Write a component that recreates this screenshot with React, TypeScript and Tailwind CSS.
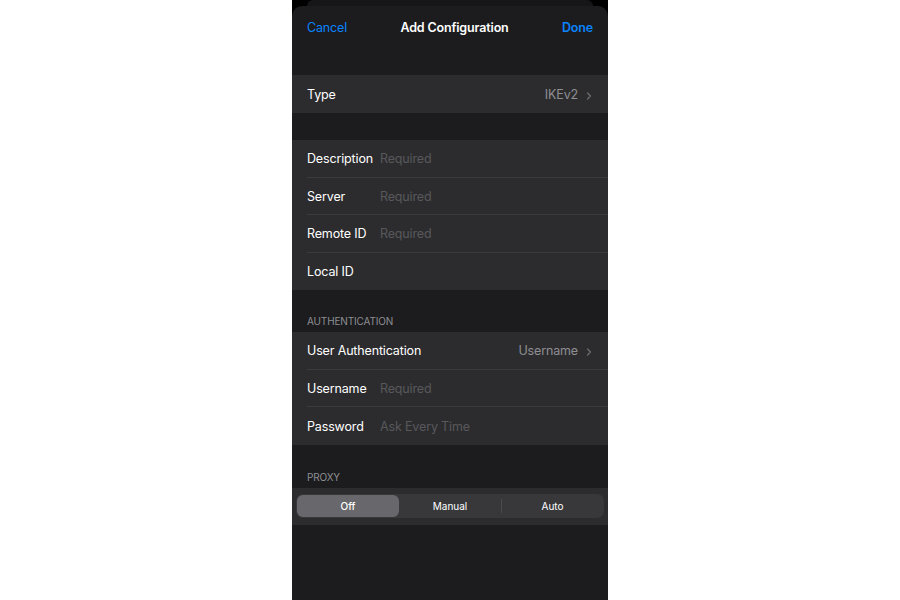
import { ChevronRight } from "lucide-react";

type Field = { label: string; placeholder?: string; value?: string; chevron?: boolean };

const generalFields: Field[] = [
  { label: "Description", placeholder: "Required" },
  { label: "Server", placeholder: "Required" },
  { label: "Remote ID", placeholder: "Required" },
  { label: "Local ID" },
];

const authFields: Field[] = [
  { label: "User Authentication", value: "Username", chevron: true },
  { label: "Username", placeholder: "Required" },
  { label: "Password", placeholder: "Ask Every Time" },
];

const Row = ({ field, last }: { field: Field; last: boolean }) => (
  <div className="flex h-[37.5px] pl-[15px]">
    <div
      className={`flex flex-1 items-center pt-[3px] pr-[13px] ${
        last ? "" : "border-b border-[#3a3a3c]"
      }`}
    >
      {field.value ? (
        <>
          <span className="text-white">{field.label}</span>
          <span className="ml-auto text-[#8e8e93]">{field.value}</span>
          <ChevronRight className="ml-[5px] h-[12px] w-[12px] text-[#6c6c70]" strokeWidth={2.5} />
        </>
      ) : (
        <>
          <span className="w-[73px] shrink-0 text-white">{field.label}</span>
          {field.placeholder && (
            <span className="text-[#58585c]">{field.placeholder}</span>
          )}
        </>
      )}
    </div>
  </div>
);

const SectionHeader = ({ title, height }: { title: string; height: string }) => (
  <div className={`flex items-end pl-[15px] pb-[3px] text-[10px] text-[#8e8e93] ${height}`}>
    {title}
  </div>
);

export default function App() {
  const segments = ["Off", "Manual", "Auto"];

  return (
    <div
      className="flex h-[600px] w-[900px] justify-center bg-white"
      style={{ fontFamily: "Inter, 'Noto Sans', sans-serif" }}
    >
      <div className="flex w-[316px] flex-col bg-black">
        <div className="mx-[15px] h-[6px] rounded-t-[8px] bg-[#161618]" />
        <div className="flex flex-1 flex-col rounded-t-[10px] bg-[#1c1c1e] text-[12.5px] tracking-[-0.15px]">
          <div className="flex h-[43px] items-center justify-between px-[15px] pt-[2px]">
            <span className="text-[#0a84ff]">Cancel</span>
            <span className="font-semibold text-white">Add Configuration</span>
            <span className="font-semibold text-[#0a84ff]">Done</span>
          </div>
          <div className="h-[26px]" />

          <div className="bg-[#2c2c2e]">
            <div className="flex h-[38px] items-center pt-[3px] pl-[15px] pr-[13px]">
              <span className="text-white">Type</span>
              <span className="ml-auto text-[#8e8e93]">IKEv2</span>
              <ChevronRight className="ml-[5px] h-[12px] w-[12px] text-[#6c6c70]" strokeWidth={2.5} />
            </div>
          </div>

          <div className="h-[27px]" />

          <div className="bg-[#2c2c2e]">
            {generalFields.map((f, i) => (
              <Row key={f.label} field={f} last={i === generalFields.length - 1} />
            ))}
          </div>

          <SectionHeader title="AUTHENTICATION" height="h-[42px]" />
          <div className="bg-[#2c2c2e]">
            {authFields.map((f, i) => (
              <Row key={f.label} field={f} last={i === authFields.length - 1} />
            ))}
          </div>

          <SectionHeader title="PROXY" height="h-[43px]" />
          <div className="flex h-[37px] items-center bg-[#2c2c2e] px-[4px]">
            <div className="flex h-[24px] flex-1 items-center rounded-[7px] bg-[#38383b] p-[1px]">
              {segments.map((s, i) => (
                <div key={s} className="flex h-full flex-1 items-center">
                  {i === 2 && <div className="h-[14px] w-px bg-[#4a4a4e]" />}
                  <div
                    className={`flex h-full flex-1 items-center justify-center rounded-[6px] text-[10px] tracking-normal ${
                      i === 0 ? "bg-[#68686c] font-medium text-white" : "text-white"
                    }`}
                  >
                    {s}
                  </div>
                </div>
              ))}
            </div>
          </div>
        </div>
      </div>
    </div>
  );
}
